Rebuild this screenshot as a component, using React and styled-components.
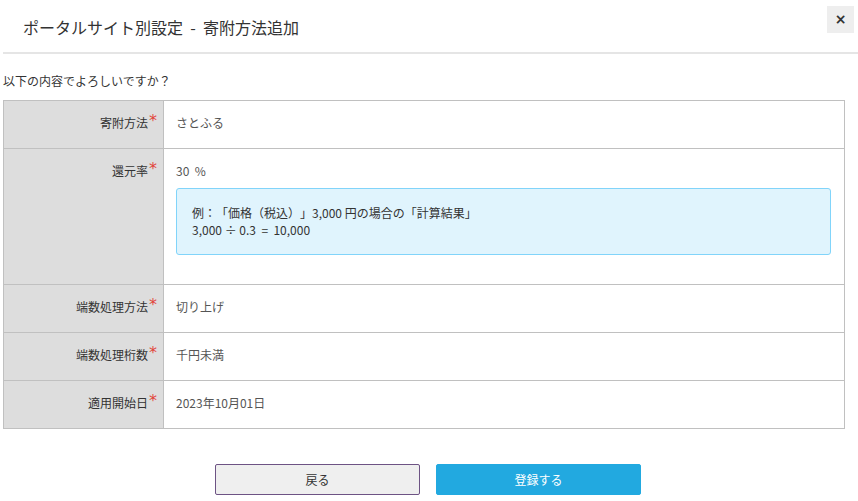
import React from "react";
import styled, { createGlobalStyle } from "styled-components";

const GlobalStyle = createGlobalStyle`
  html, body {
    margin: 0;
    padding: 0;
    background: #fff;
  }
  body {
    font-family: "Noto Sans CJK JP", "Noto Sans", sans-serif;
    font-size: 12px;
    color: #333;
    text-spacing-trim: space-all;
  }
`;

const rows = [
  { label: "寄附方法", value: "さとふる" },
  { label: "還元率", value: "30\u00a0\u00a0%", example: true },
  { label: "端数処理方法", value: "切り上げ" },
  { label: "端数処理桁数", value: "千円未満" },
  { label: "適用開始日", value: "2023年10月01日" }
];

const App = () => (
  <>
    <GlobalStyle />
    <Page>
      <Header>
        <Title>ポータルサイト別設定&nbsp;&nbsp;-&nbsp;&nbsp;寄附方法追加</Title>
        <CloseButton type="button">×</CloseButton>
      </Header>
      <Body>
        <Question>以下の内容でよろしいですか？</Question>
        <Table>
          {rows.map(row => (
            <Row key={row.label}>
              <Label>
                {row.label}
                <Required>*</Required>
              </Label>
              <Value>
                <span>{row.value}</span>
                {row.example && (
                  <InfoBox>
                    例：「価格（税込）」3,000 円の場合の「計算結果」
                    <br />
                    3,000 ÷ 0.3&nbsp; =&nbsp; 10,000
                  </InfoBox>
                )}
              </Value>
            </Row>
          ))}
        </Table>
        <Actions>
          <Button type="button">戻る</Button>
          <Button type="button" primary>
            登録する
          </Button>
        </Actions>
      </Body>
    </Page>
  </>
);

const Page = styled.div`
  width: 858px;
  padding-left: 3px;
  box-sizing: border-box;
`;

const Header = styled.div`
  display: flex;
  justify-content: space-between;
  align-items: flex-start;
  height: 52px;
  border-bottom: 2px solid #e5e5e5;
`;

const Title = styled.h1`
  margin: 17px 0 0 20px;
  font-size: 16px;
  font-weight: 400;
  line-height: 20px;
  color: #333;
`;

const CloseButton = styled.button`
  width: 27px;
  height: 27px;
  margin: 6px 4px 0 0;
  padding: 0;
  border: none;
  background: #eeeeee;
  color: #333;
  font-family: "DejaVu Sans", sans-serif;
  font-size: 14px;
  line-height: 27px;
  font-weight: 700;
`;

const Body = styled.div`
  padding-top: 18px;
`;

const Question = styled.p`
  margin: 0 0 11px;
  font-size: 12px;
  line-height: 17px;
  color: #333;
`;

const Table = styled.div`
  width: 842px;
  border: 1px solid #c0c0c0;
  box-sizing: border-box;
`;

const Row = styled.div`
  display: grid;
  grid-template-columns: 160px 1fr;
  & + & {
    border-top: 1px solid #c0c0c0;
  }
`;

const Label = styled.div`
  background: #dddddd;
  border-right: 1px solid #c0c0c0;
  text-align: right;
  padding: 12px 6px 15px 0;
  line-height: 19px;
  min-height: 47px;
  box-sizing: border-box;
  color: #333;
`;

const Required = styled.span`
  color: #e2453c;
  font-family: "DejaVu Sans", sans-serif;
  font-size: 16px;
  line-height: 10px;
  position: relative;
  top: -2px;
  margin-left: 1px;
`;

const Value = styled.div`
  display: flex;
  flex-direction: column;
  align-items: stretch;
  padding: 12px 13px 14px 12px;
  line-height: 19px;
  color: #555;
`;

const InfoBox = styled.div`
  margin: 8px 0 15px;
  padding: 15px 15px 16px;
  background: #e0f4fd;
  border: 1px solid #81d4fa;
  border-radius: 3px;
  line-height: 17px;
  color: #333;
`;

const Actions = styled.div`
  display: flex;
  justify-content: center;
  gap: 16px;
  margin-top: 35px;
  padding-right: 5px;
`;

const Button = styled.button`
  width: 205px;
  height: 31px;
  border-radius: 2px;
  font-family: "Noto Sans CJK JP", "Noto Sans", sans-serif;
  font-size: 12px;
  border: 1px solid ${props => (props.primary ? "#22a9e0" : "#6d5384")};
  background: ${props => (props.primary ? "#22a9e0" : "#efefef")};
  color: ${props => (props.primary ? "#fff" : "#333")};
`;

export default App;
